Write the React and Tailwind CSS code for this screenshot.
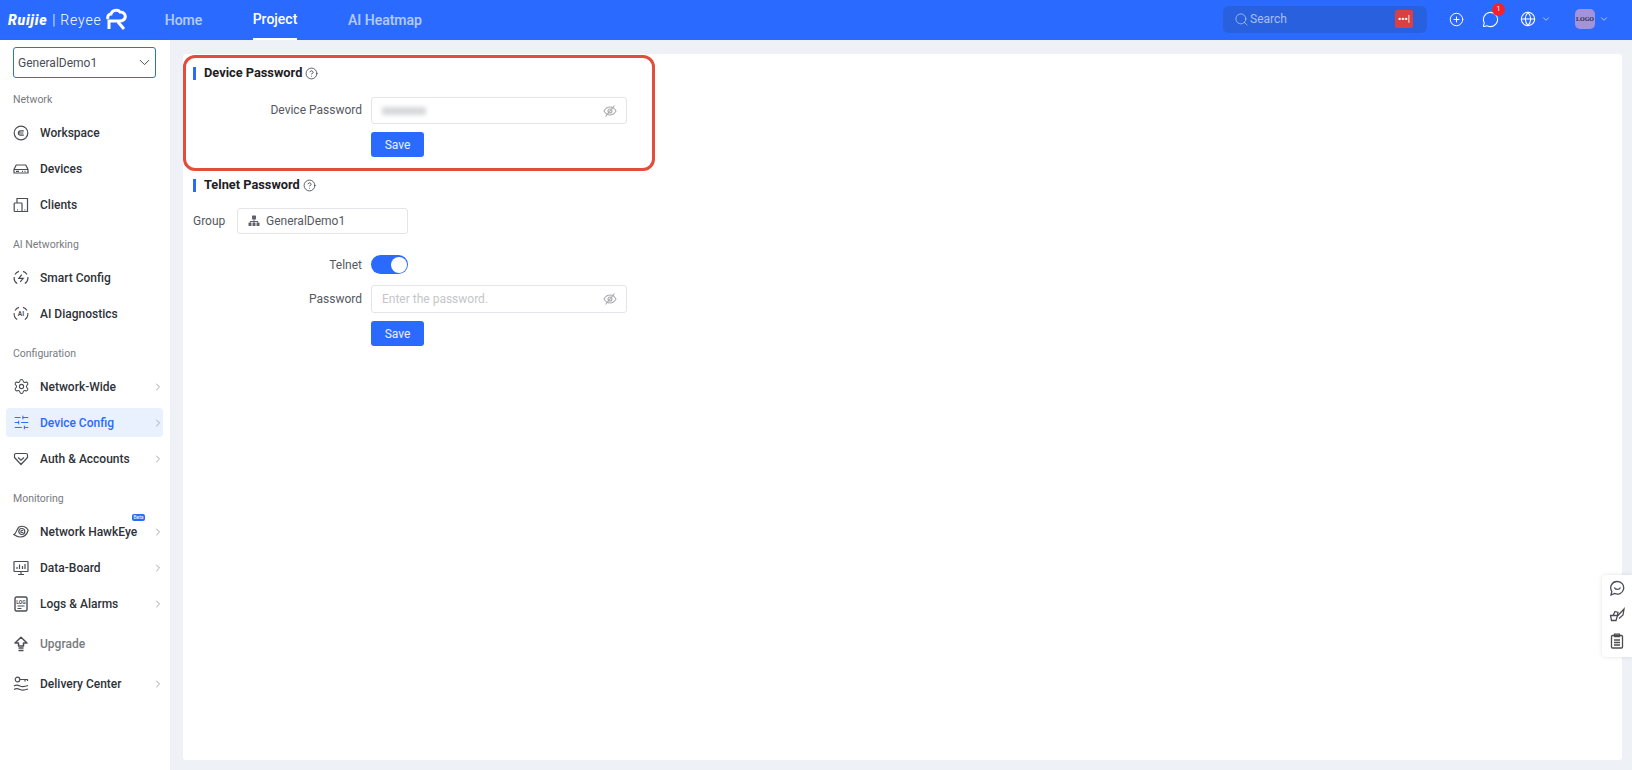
import { ChevronDown, ChevronRight, CirclePlus, Globe, MessageCircle, Search, Settings, SlidersHorizontal, CircleHelp } from 'lucide-react';

// Sidebar icons
const WorkspaceIcon = () => (
  <svg width="16" height="16" viewBox="0 0 16 16" fill="none" stroke="currentColor" strokeWidth="1.2">
    <circle cx="8" cy="8" r="6.8" />
    <path d="M10.8 5.8H7.6a2.2 2.2 0 0 0 0 4.4h3.2M6 8h4.4" />
  </svg>
);

const DevicesIcon = () => (
  <svg width="16" height="16" viewBox="0 0 16 16" fill="none" stroke="currentColor" strokeWidth="1.2">
    <path d="M3.2 4h9.6L15 8.5v3.5H1V8.5L3.2 4Z" />
    <path d="M1 8.5h14M3 10.3h3M9 10.3h1M11.5 10.3h1" />
  </svg>
);

const ClientsIcon = () => (
  <svg width="16" height="16" viewBox="0 0 16 16" fill="none" stroke="currentColor" strokeWidth="1.2">
    <path d="M4 6V1.5h10.5v13H9" />
    <rect x="1.2" y="6" width="7.8" height="8.5" rx="0.8" />
    <path d="M4 12.8h.8M11.5 12.8h.8" />
  </svg>
);

const SmartConfigIcon = () => (
  <svg width="16" height="16" viewBox="0 0 16 16" fill="none" stroke="currentColor" strokeWidth="1.2">
    <path d="M2 4.500A6.800 6.800 0 0 1 6 1.400M10 1.400A6.800 6.800 0 0 1 14 4.500M14.800 7a6.800 6.800 0 0 1-3 6.600M4.200 13.600A6.800 6.800 0 0 1 1.200 7" />
    <path d="M8.800 4.600 5.800 8.400h4.400L7.200 11.800" />
  </svg>
);

const AiIcon = () => (
  <svg width="16" height="16" viewBox="0 0 16 16" fill="none" stroke="currentColor" strokeWidth="1.1">
    <path d="M2 4.500A6.800 6.800 0 0 1 6 1.400M10 1.400A6.800 6.800 0 0 1 14 4.500M14.800 7a6.800 6.800 0 0 1-3 6.600M4.200 13.600A6.800 6.800 0 0 1 1.200 7" />
    <text x="8" y="10.400" textAnchor="middle" fontSize="6.500" fontWeight="700" fill="currentColor" stroke="none" fontFamily="Roboto, sans-serif">AI</text>
  </svg>
);

const AuthIcon = () => (
  <svg width="16" height="16" viewBox="0 0 16 16" fill="none" stroke="currentColor" strokeWidth="1.2">
    <path d="M3 2.500h10a1.500 1.500 0 0 1 1.500 1.500v2.500L8 13.500 1.500 6.500V4A1.500 1.500 0 0 1 3 2.500Z" strokeLinejoin="round" />
    <path d="M5 6.500 8 9.300l3-2.800" />
  </svg>
);

const HawkEyeIcon = () => (
  <svg width="16" height="16" viewBox="0 0 16 16" fill="none" stroke="currentColor" strokeWidth="1.2">
    <path d="M.8 10.500c2.500-.5 2.500-5 5.200-7.500 3-1.500 6.800-.5 9.200 3-1 4-4.200 7-8.200 7-2.500 0-4-1-6.200-2.500Z" />
    <circle cx="8.800" cy="7.500" r="3" />
    <path d="M10.200 6.500H8.800a1 1 0 0 0 0 2h1.400" />
  </svg>
);

const DataBoardIcon = () => (
  <svg width="16" height="16" viewBox="0 0 16 16" fill="none" stroke="currentColor" strokeWidth="1.2">
    <rect x="1" y="1.500" width="14" height="10" rx="0.5" />
    <path d="M8 11.500v3M5 14.500h6M4 9V7M6.500 9V4.500M9.500 9V6M12 9V4" />
  </svg>
);

const LogsIcon = () => (
  <svg width="16" height="16" viewBox="0 0 16 16" fill="none" stroke="currentColor" strokeWidth="1.2">
    <rect x="2" y="1" width="12" height="14" rx="1.500" strokeWidth="1.400" />
    <text x="8" y="7.500" textAnchor="middle" fontSize="5" fontWeight="700" fill="currentColor" stroke="none" fontFamily="Roboto, sans-serif">LOG</text>
    <path d="M4.500 10h7M4.500 12.500h4" />
  </svg>
);

const UpgradeIcon = () => (
  <svg width="16" height="16" viewBox="0 0 16 16" fill="none" stroke="currentColor" strokeWidth="1.500">
    <path d="M8 1.200 2 7h3.500v3h5V7H14L8 1.200Z" strokeLinejoin="round" />
    <path d="M5.500 12h5M5.500 14.500h5" />
  </svg>
);

const DeliveryIcon = () => (
  <svg width="16" height="16" viewBox="0 0 16 16" fill="none" stroke="currentColor" strokeWidth="1.200">
    <circle cx="4.500" cy="3.500" r="2.300" />
    <path d="M6.800 3.500h8M12 3.500v2M14.500 3.500v1.500" />
    <path d="M1 10c2-1.500 4-1 6 0s4 1 8-.5M1 13.500c2-1.500 4-1 6 0s4 1 8-.5" />
  </svg>
);

const GearIcon = (props) => <Settings {...props} size={17} strokeWidth={1.5} />;

const SlidersIcon = (props) => <SlidersHorizontal {...props} size={17} strokeWidth={1.4} />;

const ChatFaceIcon = () => (
  <svg width="16" height="16" viewBox="0 0 16 16" fill="none" stroke="currentColor" strokeWidth="1.300">
    <path d="M8.500 1.500a6.300 6.300 0 1 1-3 11.900L2 15l.8-3.700A6.300 6.300 0 0 1 8.500 1.500Z" />
    <path d="M5.300 7.500c1 2.500 5 2.500 6.200 0" />
  </svg>
);

const SignIcon = () => (
  <svg width="16" height="16" viewBox="0 0 16 16" fill="none" stroke="currentColor" strokeWidth="1.300">
    <path d="M1.500 8.500h7l-1.500 5H2.500l-1-5ZM4 8.500 6 4.500l3 1L8.500 8" />
    <path d="m8.500 9 6.500-7-1 6-4 3.500" />
  </svg>
);

const ClipboardIcon = () => (
  <svg width="16" height="16" viewBox="0 0 16 16" fill="none" stroke="currentColor" strokeWidth="1.300">
    <rect x="2.500" y="2.500" width="11" height="12.500" rx="1" />
    <path d="M5.500 1.200h5v2.300h-5zM5 7h6M5 9.500h6M5 12h6" />
  </svg>
);

const EyeSlash = () => (
  <svg width="14" height="14" viewBox="0 0 14 14" fill="none" stroke="#a6a9ad" strokeWidth="1.100">
    <path d="M1 7c1.500-2.700 3.500-4 6-4s4.500 1.300 6 4c-1.500 2.700-3.500 4-6 4s-4.500-1.300-6-4Z" />
    <circle cx="7" cy="7" r="2" />
    <path d="M11.500 1.500 2.500 12.500" />
  </svg>
);

const OrgIcon = () => (
  <svg width="12" height="12" viewBox="0 0 12 12" fill="#5f6369">
    <rect x="4" y="0.500" width="4" height="4" rx="0.500" />
    <rect x="0.500" y="7.500" width="3" height="3.500" rx="0.500" />
    <rect x="4.500" y="7.500" width="3" height="3.500" rx="0.500" />
    <rect x="8.500" y="7.500" width="3" height="3.500" rx="0.500" />
    <path d="M5.500 4.500h1V6h3.500v1.500H9V7H6.500v.5h-1V7H3v.5H2V6h3.500V4.500Z" />
  </svg>
);

const SectionLabel = ({ children, className = '' }) => (
  <div className={`pl-[13px] text-[10.5px] leading-[14px] text-[#777b80] ${className}`}>{children}</div>
);

const NavItem = ({ icon: Icon, label, arrow, active, muted, badge }) => (
  <div className={`relative mx-[6px] mb-[7px] flex h-[29px] w-[157px] items-center rounded pl-[7px] ${active ? 'bg-[#e9f0fe] text-[#2b6afe]' : muted ? 'text-[#777b80]' : 'text-[#2e3238]'}`}>
    <span className={`flex w-[27px] shrink-0 ${active ? '' : 'text-[#4a4e54]'}`}>
      <Icon />
    </span>
    <span className="text-[12px] font-medium whitespace-nowrap">{label}</span>
    {arrow && <ChevronRight size={12} className="absolute right-[-1px] text-[#a6a9ad]" />}
    {badge && <span className="absolute top-[-3px] left-[126px] h-[7px] w-[13px] rounded-[2px] bg-[#2b6afe] text-center text-[5px] leading-[7px] text-white">Beta</span>}
  </div>
);

const Sidebar = () => (
  <aside className="flex w-[170px] shrink-0 flex-col bg-white shadow-[1px_0_2px_rgba(0,0,0,0.06)]">
    <div className="mx-[13px] mt-[7px] flex h-[31px] w-[143px] items-center justify-between rounded-[3px] border border-[#2b6afe] pr-[2px] pl-[4px] text-[12px] text-[#4a4e54]">
      GeneralDemo1
      <ChevronDown size={17} strokeWidth={1.4} />
    </div>
    <SectionLabel className="mt-[15px] mb-[11px]">Network</SectionLabel>
    <NavItem icon={WorkspaceIcon} label="Workspace" />
    <NavItem icon={DevicesIcon} label="Devices" />
    <NavItem icon={ClientsIcon} label="Clients" />
    <SectionLabel className="mt-[12px] mb-[11px]">AI Networking</SectionLabel>
    <NavItem icon={SmartConfigIcon} label="Smart Config" />
    <NavItem icon={AiIcon} label="AI Diagnostics" />
    <SectionLabel className="mt-[12px] mb-[11px]">Configuration</SectionLabel>
    <NavItem icon={GearIcon} label="Network-Wide" arrow />
    <NavItem icon={SlidersIcon} label="Device Config" arrow active />
    <NavItem icon={AuthIcon} label="Auth & Accounts" arrow />
    <SectionLabel className="mt-[12px] mb-[11px]">Monitoring</SectionLabel>
    <NavItem icon={HawkEyeIcon} label="Network HawkEye" arrow badge />
    <NavItem icon={DataBoardIcon} label="Data-Board" arrow />
    <NavItem icon={LogsIcon} label="Logs & Alarms" arrow />
    <div className="h-[4px]" />
    <NavItem icon={UpgradeIcon} label="Upgrade" muted />
    <div className="h-[4px]" />
    <NavItem icon={DeliveryIcon} label="Delivery Center" arrow />
  </aside>
);

const Header = () => (
  <header className="flex h-[40px] shrink-0 items-center bg-[#2b6afe] text-white">
    <div className="flex w-[165px] shrink-0 items-center pl-[8px]">
      <span className="text-[14px] leading-none font-black tracking-[0.7px] italic">Ruijie</span>
      <span className="ml-[5px] text-[14px] leading-none font-light tracking-[0.8px]">| Reyee</span>
      <svg width="21" height="23" viewBox="0 0 21 23" fill="none" stroke="currentColor" strokeWidth="3" className="mb-[2px] ml-[5px]">
        <path d="M2 11c-1-3 1-5 3-5 1-4 7-5 9-2 4 0 6 3 5 6-1 2-3 3-5 3H3v8M12 14l6 7" />
      </svg>
    </div>
    <nav className="flex h-full text-[14px] font-medium">
      <span className="flex h-full w-[37px] items-center justify-center whitespace-nowrap text-white/65">Home</span>
      <span className="ml-[51px] flex h-full w-[44px] items-center justify-center border-b-2 border-white whitespace-nowrap">Project</span>
      <span className="ml-[51px] flex h-full items-center whitespace-nowrap text-white/65">AI Heatmap</span>
    </nav>
    <div className="mb-[2px] ml-auto flex items-center">
      <div className="flex h-[27px] w-[204px] items-center rounded-md bg-[#2860dd] pr-[14px] pl-[11px] text-[12px] text-white/60">
        <Search size={15} strokeWidth={1.3} />
        <span className="ml-[1px]">Search</span>
        <span className="ml-auto flex h-[18px] w-[18px] items-center justify-center rounded-[2px] bg-[#d9403f] text-[9px] leading-none font-bold text-white">•••|</span>
      </div>
      <CirclePlus size={15} strokeWidth={1.6} className="ml-[22px]" />
      <div className="relative ml-[18px]">
        <MessageCircle size={17} strokeWidth={1.5} />
        <span className="absolute top-[-8px] left-[10px] flex h-[13px] w-[13px] items-center justify-center rounded-full bg-[#f5222d] text-[7px] text-white">1</span>
      </div>
      <Globe size={16} strokeWidth={1.6} className="ml-[21px]" />
      <ChevronDown size={10} className="ml-[5px] text-white/75" />
      <div className="ml-[24px] flex h-[20px] w-[20px] items-center justify-center rounded-[5px] bg-[#a393dc] font-['Liberation_Serif',serif] text-[6px] font-bold text-[#2a2a3a]">LOGO</div>
      <ChevronDown size={10} className="mr-[23px] ml-[4px] text-white/75" />
    </div>
  </header>
);

const SectionTitle = ({ children }) => (
  <div className="flex h-[14px] items-center">
    <span className="h-[13px] w-[3px] bg-[#2b6afe]" />
    <span className="ml-[8px] text-[12.8px] font-bold text-[#1d2024]">{children}</span>
    <CircleHelp size={13} strokeWidth={1.4} className="ml-[3px] text-[#2e3238]" />
  </div>
);

const SaveButton = () => (
  <button className="ml-[178px] flex h-[25px] w-[53px] items-center justify-center rounded-[3px] bg-[#2b6afe] text-[12px] text-white/90">
    Save
  </button>
);

const PasswordRow = ({ label, children, className = '' }) => (
  <div className={`flex items-center ${className}`}>
    <label className="mb-[1px] w-[169px] text-right text-[12px] text-[#55595f]">{label}</label>
    <div className="ml-[9px] flex h-full w-[256px] items-center justify-between rounded-[3px] border border-[#e3e5e8] pr-[9px] pl-[10px] text-[12px]">
      {children}
      <EyeSlash />
    </div>
  </div>
);

const Content = () => (
  <main className="relative flex-1 bg-[#eef2f6] pt-[14px] pr-[10px] pb-[10px] pl-[13px]">
    <div className="h-full rounded-[3px] bg-white pt-[12px] pl-[10px]">
      <SectionTitle>Device Password</SectionTitle>
      <PasswordRow label="Device Password" className="mt-[17px] h-[27px]">
        <span className="h-[8px] w-[44px] bg-[#d6d8da] blur-[2px]" />
      </PasswordRow>
      <div className="mt-[8px]"><SaveButton /></div>

      <div className="mt-[21px]"><SectionTitle>Telnet Password</SectionTitle></div>
      <div className="mt-[16px] flex items-center">
        <span className="w-[33px] text-[12px] text-[#55595f]">Group</span>
        <div className="ml-[11px] flex h-[26px] w-[171px] items-center rounded-[3px] border border-[#e3e5e8] pl-[10px] text-[12px] text-[#55595f]">
          <OrgIcon />
          <span className="ml-[6px]">GeneralDemo1</span>
        </div>
      </div>
      <div className="mt-[21px] flex items-center">
        <span className="w-[169px] text-right text-[12px] text-[#55595f]">Telnet</span>
        <span className="ml-[9px] flex h-[19px] w-[37px] items-center justify-end rounded-full bg-[#2b6afe] pr-[1px]">
          <span className="h-[16px] w-[16px] rounded-full bg-white" />
        </span>
      </div>
      <PasswordRow label="Password" className="mt-[11px] h-[28px]">
        <span className="text-[#c4c6c9]">Enter the password.</span>
      </PasswordRow>
      <div className="mt-[8px]"><SaveButton /></div>
    </div>

    {/* red annotation box over the first section */}
    <div className="pointer-events-none absolute top-[15px] left-[13px] h-[116px] w-[472px] rounded-[12px] border-[3px] border-[#e24e3b]" />

    {/* floating shortcuts */}
    <div className="absolute top-[535px] right-0 flex h-[82px] w-[30px] flex-col items-center justify-between rounded-l bg-white pt-[5px] pb-[8px] text-[#4a4e54] shadow-[0_0_4px_rgba(0,0,0,0.12)]">
      <ChatFaceIcon />
      <SignIcon />
      <ClipboardIcon />
    </div>
  </main>
);

const App = () => (
  <div className="flex h-[770px] w-[1632px] flex-col overflow-hidden font-['Roboto',sans-serif]">
    <Header />
    <div className="flex flex-1">
      <Sidebar />
      <Content />
    </div>
  </div>
);

export default App;
